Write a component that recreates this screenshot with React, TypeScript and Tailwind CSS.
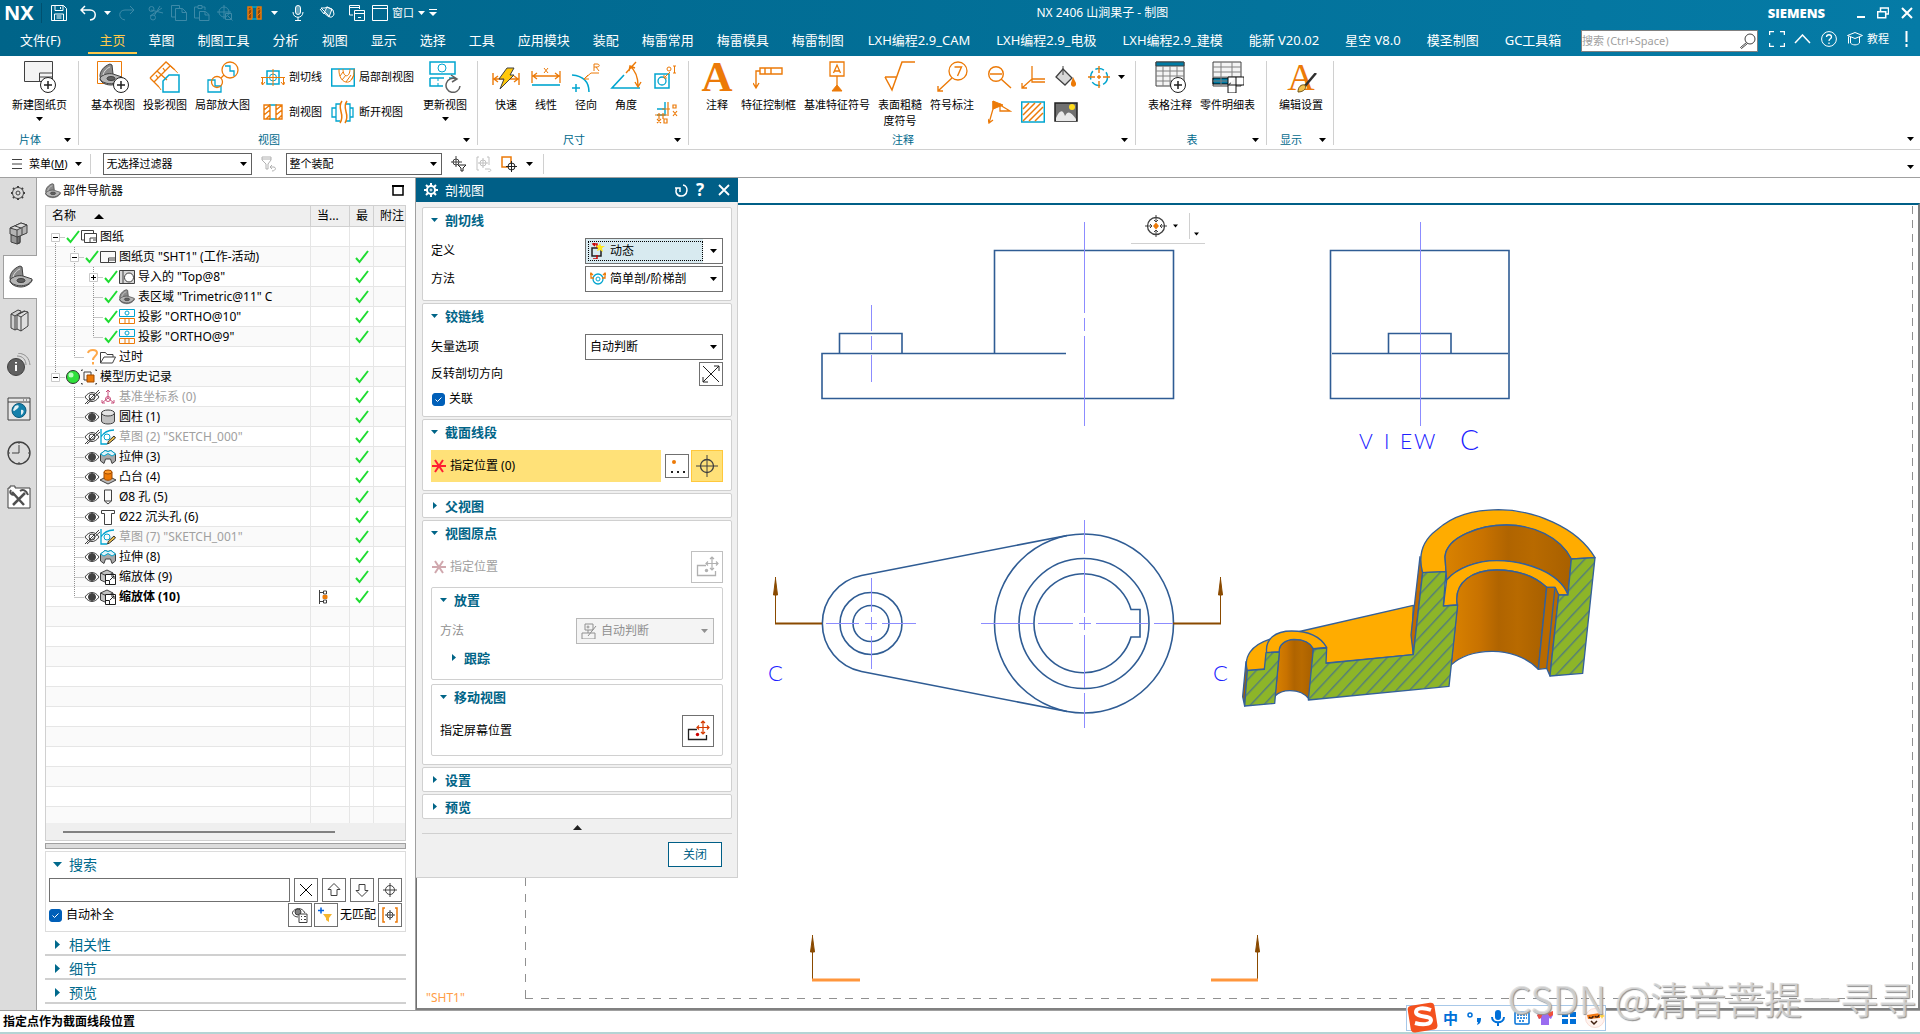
import React, { useState } from "react";

type IconProps = { w?: number; h?: number; box?: string; children: React.ReactNode; className?: string };

const Icon = ({ w = 16, h, box, children, className = "" }: IconProps) => (
  <svg
    width={w}
    height={h ?? w}
    viewBox={box ?? `0 0 ${w} ${h ?? w}`}
    fill="none"
    stroke="currentColor"
    className={`shrink-0 ${className}`}
    aria-hidden="true"
  >
    {children}
  </svg>
);

const OR = "#ec7a08";
const CY = "#00a5cf";
const DK = "#404040";

const Caret = ({ className = "" }: { className?: string }) => (
  <Icon w={7} h={4} className={className}>
    <path d="M0 0h7L3.500 4z" fill="currentColor" stroke="none" />
  </Icon>
);

/* ---------- title bar ---------- */

const TitleSep = () => <span className="h-5 w-px bg-[#00506f]" />;

const TitleBar = () => (
  <div className="flex h-[26px] items-center pl-1 text-white">
    <span className="w-[37px] text-[20px] leading-6 font-bold">NX</span>
    <TitleSep />
    <button aria-label="保存" className="ml-[9px]">
      <Icon><path d="M.5.5h12l3 3v12H.5zM4 .5v5h8v-5M9.500 2v2M3.500 15.500V9h9v6.500M5.500 11h5M5.500 13h5" /></Icon>
    </button>
    <button aria-label="撤销" className="ml-[13px]">
      <Icon><path d="M5 1L1 5l4 4M1 5h9c7 0 7 9 0 10" strokeWidth="1.500" /></Icon>
    </button>
    <Caret className="ml-2" />
    <button aria-label="重做" className="ml-2 text-[#3d8aa8]">
      <Icon><path d="M11 1l4 4-4 4M15 5H6c-7 0-7 9 0 10" /></Icon>
    </button>
    <div className="ml-2"><TitleSep /></div>
    <div className="ml-[5px] flex gap-[7px] text-[#3d8aa8]">
      <button aria-label="剪切">
        <Icon><path d="M2 11L14 3M3 5l12 3" /><circle cx="3.500" cy="4" r="2.500" /><circle cx="5" cy="12.500" r="2.500" /><path d="M12 1L6 11" /></Icon>
      </button>
      <button aria-label="复制">
        <Icon><path d="M4 12H.5V.5h8V3M4.500 3.500h7l4 4v8h-11zM11 3.500v4h4.500" /></Icon>
      </button>
      <button aria-label="粘贴">
        <Icon><path d="M5 13H.5V2H4M8 2h3v3M4 .5h4v3H4zM5.500 6.500h6l3.500 3v6H5.500zM11 7v3h4" /></Icon>
      </button>
      <button aria-label="移动">
        <Icon><circle cx="7" cy="7" r="5" /><path d="M7 0v14M0 7h14M8.500 8.500h6v6h-6zM11 11l4.500 4.500" /></Icon>
      </button>
    </div>
    <div className="ml-[7px]"><TitleSep /></div>
    <button aria-label="剖视图" className="ml-[7px]">
      <Icon w={15} h={14}><path d="M1 1h4v12H1zM10 1h4v12h-4z" stroke={OR} fill="#8a4a10" strokeWidth="1.500" /><path d="M5 1h5M5 13h5" stroke={CY} strokeWidth="1.500" /><path d="M1 5l4-3M1 10l4-4M10 5l4-3M10 10l4-4" stroke={OR} /></Icon>
    </button>
    <Caret className="ml-[9px]" />
    <div className="ml-[7px]"><TitleSep /></div>
    <button aria-label="语音" className="ml-[7px]">
      <Icon w={12} h={16}><rect x="3.500" y=".5" width="5" height="9" rx="2.500" fill="#ffffff60" /><path d="M1 7c0 7 10 7 10 0M6 12v3M3 15.500h6" /></Icon>
    </button>
    <div className="ml-2"><TitleSep /></div>
    <button aria-label="触控" className="ml-[7px]">
      <Icon><path d="M1 4l4 5M2 3l7 7c1 3 5 3 6-1l-1-4-6-3-2 1z" /><path d="M8 2L5 8l5 4 3-8z" fill="#ffffff40" /></Icon>
    </button>
    <div className="ml-[7px]"><TitleSep /></div>
    <button aria-label="切换窗口" className="ml-[7px]">
      <Icon><path d="M4 10H.5V.5h10V4M.5 2.500h10M5.500 5.500h10v10h-10zM5.500 8.500h10M9 12.500h3" /></Icon>
    </button>
    <button className="ml-[7px] flex items-center gap-1 text-[11px] leading-4">
      <Icon><path d="M.5.500h15v15H.5zM.5 3.500h15" /></Icon>
      窗口
      <Caret />
    </button>
    <Icon w={8} h={8} className="ml-1"><path d="M0 .5h8" /><path d="M0 3h8L4 7z" fill="currentColor" stroke="none" /></Icon>
    <h1 className="flex-1 text-center text-[12px] leading-4">NX 2406 山涧果子 - 制图</h1>
    <span className="text-[13px] leading-4 font-black [font-family:'Open_Sans',sans-serif]">SIEMENS</span>
    <div className="flex items-center gap-3 pr-[7px] pl-8">
      <button aria-label="最小化"><Icon w={8} h={12}><path d="M0 10h8" strokeWidth="2" /></Icon></button>
      <button aria-label="还原"><Icon w={12}><path d="M3.500 4V1h8v6H9" strokeWidth="1.500" /><path d="M.7 4.700h8v6h-8z" strokeWidth="1.500" /></Icon></button>
      <button aria-label="关闭窗口"><Icon w={12}><path d="M1 1l10 10M11 1L1 11" strokeWidth="2" /></Icon></button>
    </div>
  </div>
);

const homeTabs = ["主页", "草图", "制图工具", "分析", "视图", "显示", "选择", "工具", "应用模块", "装配", "梅雷常用", "梅雷模具", "梅雷制图"];
const addonTabs = ["LXH编程2.9_CAM", "LXH编程2.9_电极", "LXH编程2.9_建模", "能新 V20.02", "星空 V8.0", "模圣制图", "GC工具箱"];

const TabBar = () => {
  const [active, setActive] = useState("主页");
  const renderTab = (tab: string, pad: string) => (
    <button
      key={tab}
      onClick={() => setActive(tab)}
      className={`h-7 shrink-0 border-b-2 pt-1 pb-1 whitespace-nowrap ${pad} ${
        tab === active ? "border-[#ffc84a] text-[#ffc84a]" : "border-transparent"
      }`}
    >
      {tab}
    </button>
  );
  return (
    <div className="flex h-[30px] items-start text-[13px] leading-5 text-white">
      <button className="mt-1 ml-5 mr-[27px]">文件(F)</button>
      {homeTabs.map((tab) => renderTab(tab, "pl-3 pr-[11px]"))}
      {addonTabs.map((tab) => renderTab(tab, "px-[13px]"))}
      <div className="ml-auto flex items-center pr-3">
        <div className="mt-1 flex h-[22px] w-[177px] items-center border border-[#808080] bg-white pr-px">
          <input
            aria-label="搜索"
            placeholder="搜索 (Ctrl+Space)"
            className="min-w-0 flex-1 text-[11px] text-black outline-none placeholder:text-[#a0a0a0]"
          />
          <Icon className="text-[#404040]"><circle cx="10" cy="6" r="5" /><path d="M6.500 9.500l-6 5 1 1 6-5" /></Icon>
        </div>
        <button aria-label="全屏" className="ml-[11px]"><Icon><path d="M.5 4V.5H5M11 .5h4.500V4M15.500 12v3.500H11M5 15.500H.5V12" strokeWidth="1.500" /></Icon></button>
        <button aria-label="折叠功能区" className="ml-[9px]"><Icon w={17} h={10}><path d="M1 9l7.500-8L16 9" strokeWidth="1.500" /></Icon></button>
        <button aria-label="帮助" className="ml-[10px]"><Icon><circle cx="8" cy="8" r="7.400" /><path d="M5.500 6c0-3 5-3 5 0 0 1.800-2.500 1.800-2.500 4M8 11.500v1.500" strokeWidth="1.300" /></Icon></button>
        <button className="ml-[10px] flex items-center gap-1 text-[11px] leading-4">
          <Icon><path d="M.5 4.500L8 1.500l7.500 3L8 7.500zM3.500 6v6c2 2.500 7 2.500 9 0V6M1.500 5.500v7" /></Icon>
          教程
        </button>
        <Icon w={3} h={16} className="ml-4"><path d="M1.500 0v11M1.500 13v3" strokeWidth="2" /></Icon>
      </div>
    </div>
  );
};

/* ---------- ribbon ---------- */

const BigButton = ({ icon, label, caret }: { icon: React.ReactNode; label: React.ReactNode; caret?: boolean }) => (
  <button className="flex shrink-0 flex-col items-center pt-[5px] text-[11px] leading-4 whitespace-nowrap">
    {icon}
    <span className="mt-1">{label}</span>
    {caret && <Caret className="mt-1" />}
  </button>
);

const SmallButton = ({ icon, label }: { icon: React.ReactNode; label: string }) => (
  <button aria-label={label} className="flex h-6 items-center gap-1 text-[11px] leading-4 whitespace-nowrap">
    {icon}
    {label}
  </button>
);

const IconButton = ({ icon, label }: { icon: React.ReactNode; label: string }) => (
  <button aria-label={label} className="flex h-6 w-6 items-center justify-center">{icon}</button>
);

const Stack = ({ children, className = "" }: { children: React.ReactNode; className?: string }) => (
  <div className={`flex flex-col gap-[11px] pt-[9px] ${className}`}>{children}</div>
);

const Group = ({ title, width, children }: { title: string; width: string; children: React.ReactNode }) => (
  <section className={`relative flex shrink-0 flex-col justify-between ${width}`}>
    <div className="flex items-start">{children}</div>
    <div className="flex h-[18px] items-center text-[11px] leading-4 text-[#00698c]">
      <h2 className="flex-1 pr-1 text-center">{title}</h2>
      <Caret className="mr-2 text-black" />
    </div>
    <span className="absolute top-[5px] right-0 bottom-1 w-px bg-[#d0d0d0]" />
  </section>
);

const PlusBadge = ({ x = 24, y = 24 }: { x?: number; y?: number }) => (
  <g stroke="#202020">
    <circle cx={x} cy={y} r="7.500" fill="#fff" />
    <path d={`M${x - 4} ${y}h8M${x} ${y - 4}v8`} strokeWidth="1.500" />
  </g>
);

const bracketPart = (
  <>
    <path d="M1 13C1 8 5 3 11 1l2 1 1 9-5 5-7 1z" fill="#8a8a8a" stroke="#404040" />
    <path d="M1 15c3-4 9-5 13-4l9 3c1 3-5 8-11 8-6 0-11-3-11-7z" fill="#b5b5b5" stroke="#404040" />
    <path d="M1 16c2 5 17 8 22-1" stroke="#404040" />
    <ellipse cx="12" cy="15.500" rx="4" ry="2" fill="#606060" stroke="#404040" />
    <path d="M4 12c1-4 4-7 7-8" stroke="#d8d8d8" />
  </>
);

const Ribbon = () => (
  <div className="flex h-[94px] border-b border-[#d0d0d0] bg-white text-black">
    <Group title="片体" width="w-[79px]">
      <div className="ml-3">
        <BigButton
          caret
          label="新建图纸页"
          icon={<Icon w={32}><path d="M.5.5h28v20H.5z" fill="#f4f4f4" stroke={DK} /><path d="M15.500 20v-8h13M15.500 16h13" stroke={DK} /><PlusBadge /></Icon>}
        />
      </div>
    </Group>

    <Group title="视图" width="w-[399px]">
      <div className="ml-3 flex gap-2">
        <BigButton
          label="基本视图"
          icon={<Icon w={32}><path d="M.5.5h24v22H.5z" stroke={OR} /><g transform="translate(2 2)">{bracketPart}</g><PlusBadge /></Icon>}
        />
        <BigButton
          label="投影视图"
          icon={<Icon w={32}><path d="M1 17L17 1l9 8M1 17l9 9M8 10l10 9M5 21L21 5M9 17l-2-3M16 10l-2-3" stroke={OR} strokeWidth="1.300" /><path d="M12 29l-2-3M17 1l13 12" stroke={OR} strokeDasharray="4 2" /><path d="M14 31V20l6-6h10v17z" stroke={CY} strokeWidth="1.500" /></Icon>}
        />
        <BigButton
          label="局部放大图"
          icon={<Icon w={32}><circle cx="23" cy="9" r="8" stroke={OR} strokeWidth="1.300" /><path d="M18 5h5v5h4v5" stroke={CY} strokeWidth="1.300" /><path d="M1 31V19h7v6h6v6z" stroke={CY} strokeWidth="1.300" /><circle cx="10" cy="21" r="5.500" stroke={OR} strokeWidth="1.300" /><path d="M14 17l3-3" stroke={OR} strokeWidth="1.300" /></Icon>}
        />
      </div>
      <Stack className="ml-[11px]">
        <SmallButton
          label="剖切线"
          icon={<Icon w={24}><path d="M6 6h12v13H6z" stroke={CY} strokeWidth="1.500" /><circle cx="12" cy="12.500" r="3.500" stroke={CY} /><path d="M0 12.500h24M1.500 13v7M22.500 13v7M0 17l1.500 3L4 17M20 17l2.500 3 1.500-3M12 4v17" stroke={OR} /></Icon>}
        />
        <SmallButton
          label="剖视图"
          icon={<Icon w={24}><path d="M8 5h8M8 19h8" stroke={CY} strokeWidth="1.500" /><path d="M3 5h6v14H3zM15 5h6v14h-6zM3 10l6-5M3 15l6-5M5 19l4-4M15 10l6-5M15 15l6-5M17 19l4-4" stroke={OR} strokeWidth="1.400" /></Icon>}
        />
      </Stack>
      <Stack className="ml-[9px]">
        <SmallButton
          label="局部剖视图"
          icon={<Icon w={24}><path d="M.7 4h22.600v17H.7z" stroke={CY} strokeWidth="1.500" /><path d="M8 4c-1 16 16 19 15 0M12 4c0 9 7 9 7 0M9 11l3-4M11 15l4-5M15 17l5-7M20 15l3-5" stroke={OR} /></Icon>}
        />
        <SmallButton
          label="断开视图"
          icon={<Icon w={24}><path d="M5 8V4h4M5 4v17h4M1 8h4v9H1zM15 4h4v17h-4M19 8h3v9h-3" stroke={CY} strokeWidth="1.300" /><path d="M11 1c-6 8 4 13-2 22M16 1c-6 8 4 13-2 22" stroke={OR} strokeWidth="1.500" /></Icon>}
        />
      </Stack>
      <div className="ml-[9px]">
        <BigButton
          caret
          label="更新视图"
          icon={<Icon w={32}><path d="M1 1h25v12H1zM1 17h14M1 17v8h13M20 17h6" stroke={CY} strokeWidth="1.500" /><circle cx="13" cy="7" r="4" stroke={CY} /><path d="M9 17v8" stroke={CY} strokeDasharray="3 2" /><path d="M31 25a7 7 0 1 1-4-7M22 14l6 4-5 3" stroke="#606060" strokeWidth="1.500" /></Icon>}
        />
      </div>
    </Group>

    <Group title="尺寸" width="w-[211px]">
      <div className="ml-2 grid grid-cols-[40px_40px_40px_40px]">
        <BigButton
          label="快速"
          icon={<Icon w={32}><path d="M3 12v12M29 12v12M3 18h26M8 15l-4 3 4 3M24 15l4 3-4 3" stroke={OR} strokeWidth="1.400" /><path d="M17 7h7l-4 7h4L10 28l4-10h-5z" fill="#ffc80a" stroke="#404040" /></Icon>}
        />
        <BigButton
          label="线性"
          icon={<Icon w={32}><path d="M2 10v12M30 10v12M2 15h28M7 12l-4 3 4 3M25 12l4 3-4 3" stroke={OR} strokeWidth="1.300" /><path d="M14 7l4 5M18 7l-4 5" stroke={OR} /><path d="M2 24h28" stroke={CY} strokeWidth="1.600" /></Icon>}
        />
        <BigButton
          label="径向"
          icon={<Icon w={32}><path d="M2 14c12 1 17 7 17 17M6 23v8M2 27h8" stroke={CY} strokeWidth="1.500" /><path d="M29 12h-8l-7 6M18 14l-4 4 5 0M24 10V3h3c3 0 3 3 0 3h-3M26 6l3 4" stroke={OR} /></Icon>}
        />
        <BigButton
          label="角度"
          icon={<Icon w={32}><path d="M14 14L2 27h28" stroke={CY} strokeWidth="1.600" /><path d="M16 12L26 1M20 5c6 5 8 12 8 20M19 10l1-5 5 2M25 21l3 5 3-5" stroke={OR} strokeWidth="1.400" /></Icon>}
        />
      </div>
      <Stack className="ml-2">
        <IconButton
          label="孔和螺纹标注"
          icon={<Icon w={24}><path d="M1 9h14v14H1z" stroke={CY} strokeWidth="1.500" /><circle cx="8" cy="16" r="4" stroke={CY} strokeWidth="1.300" /><path d="M16 7l-6 6M10 10v3h3M19 1h3M20.500 1v7M19 8h3" stroke={OR} /><circle cx="15" cy="4" r="2" stroke={OR} /></Icon>}
        />
        <IconButton
          label="坐标尺寸"
          icon={<Icon w={24}><path d="M3 9h8V2M11 9v6H3" stroke={CY} strokeWidth="1.400" /><path d="M14 2v14M8 9h8M1 15h12M5 13v6M9 13v6M19 5h3v3h-3zM19 11l4 5M23 11l-4 5M3 19l4 4M7 19l-4 4M10 19h3v4h-3z" stroke={OR} strokeWidth="1.200" /></Icon>}
        />
      </Stack>
    </Group>

    <Group title="注释" width="w-[447px]">
      <div className="ml-3 flex gap-2">
        <BigButton
          label="注释"
          icon={<span className="h-8 w-8 text-center text-[43px] leading-8 font-bold text-[#ec7a08] [font-family:'Liberation_Serif',serif]">A</span>}
        />
        <BigButton
          label="特征控制框"
          icon={<Icon w={32}><path d="M7 7h22v6H7zM12 7v6M18 7v6M7 10H3v16M0 22l3 5 3-5" stroke={OR} strokeWidth="1.400" /></Icon>}
        />
        <BigButton
          label="基准特征符号"
          icon={<Icon w={32}><path d="M9 1h14v14H9zM16 15v10M12.500 12L16 4l3.500 8M13.500 10h5" stroke={OR} strokeWidth="1.300" /><path d="M11 30h10l-5-6z" fill={OR} stroke={OR} /></Icon>}
        />
        <BigButton
          label={<>表面粗糙<br />度符号</>}
          icon={<Icon w={32}><path d="M1 16h12M1 16l7 13L18 1h13" stroke={OR} strokeWidth="1.500" /></Icon>}
        />
        <BigButton
          label="符号标注"
          icon={<Icon w={32}><circle cx="22" cy="10" r="9" stroke={OR} strokeWidth="1.300" /><path d="M16 17L2 30M2 25v5h5M18.500 6h7l-4 9" stroke={OR} strokeWidth="1.400" /></Icon>}
        />
      </div>
      <Stack className="ml-[14px]">
        <IconButton label="中心线放大" icon={<Icon w={24}><circle cx="8" cy="9" r="7.300" stroke={OR} strokeWidth="1.400" /><path d="M2 9h12M13 14l10 9" stroke={OR} strokeWidth="1.500" /></Icon>} />
        <IconButton label="目标点符号" icon={<Icon w={24}><path d="M5 1v8l10-4z" fill={OR} stroke={OR} /><path d="M5 1v8L1 23M0 19l1 4 4-3M5 9l8-5M12 5l10 6H12z" stroke={OR} strokeWidth="1.300" /></Icon>} />
      </Stack>
      <Stack className="ml-[9px]">
        <IconButton label="相交符号" icon={<Icon w={24}><path d="M11 1v16h13M11 14h13M11 14L1 23M1 18v5h5" stroke={OR} strokeWidth="1.300" /></Icon>} />
        <IconButton label="剖面线" icon={<Icon w={24}><path d="M.7 2h22.600v20H.7z" stroke={CY} strokeWidth="1.500" /><path d="M2 9l6-6M2 15L14 3M2 21L20 3M8 21L22 7M14 21l8-8" stroke={OR} strokeWidth="1.500" /></Icon>} />
      </Stack>
      <Stack className="ml-[9px]">
        <IconButton label="区域填充" icon={<Icon w={24}><path d="M9 4l9 9-7 7-9-8z" fill="#d8d8d8" stroke={DK} strokeWidth="1.300" /><path d="M9 1v9" stroke={DK} /><path d="M19 12l3 6c1 5-6 5-5 0z" fill={OR} stroke="none" /></Icon>} />
        <IconButton label="图像" icon={<Icon w={24}><path d="M1 3h22v18H1z" fill="#707070" stroke="#202020" strokeWidth="1.500" /><path d="M2 18c4-9 7-8 9-2 3-6 6-4 11 3v2H2z" fill="#e8e8e8" stroke="none" /><circle cx="18" cy="7" r="3" fill="#ffdc1e" stroke="none" /></Icon>} />
      </Stack>
      <Stack className="ml-[9px]">
        <IconButton label="中心标记" icon={<Icon w={24}><circle cx="12" cy="12" r="8.500" stroke={CY} strokeWidth="1.500" strokeDasharray="9 3" /><path d="M12 1v7M12 16v7M1 12h7M16 12h7M10 12h4M12 10v4" stroke={OR} strokeWidth="1.400" /></Icon>} />
      </Stack>
      <Caret className="mt-[19px] ml-[7px]" />
    </Group>

    <Group title="表" width="w-[131px]">
      <div className="ml-3 flex gap-2">
        <BigButton
          label="表格注释"
          icon={<Icon w={32}><path d="M2 1h28v24H2z" fill="#f4f4f4" stroke={DK} /><path d="M2 1h28v4H2z" fill="#007ca5" stroke={DK} /><path d="M2 10h28M2 15h28M2 20h28M9 5v20M16 5v20M23 5v20" stroke="#808080" /><PlusBadge /></Icon>}
        />
        <BigButton
          label="零件明细表"
          icon={<Icon w={32}><path d="M1 1h28v24H1z" fill="#f4f4f4" stroke={DK} /><path d="M1 17h17v6H1z" fill="#007ca5" /><path d="M1 6h28M1 11h28M1 16h28M1 20h16M9 1v24M20 1v15" stroke="#808080" /><path d="M16 16h16v8h-8v8h-8zM16 24h8v-8" fill="#fff" stroke="#101010" /></Icon>}
        />
      </div>
    </Group>

    <Group title="显示" width="w-[67px]">
      <div className="ml-3">
        <BigButton
          label="编辑设置"
          icon={
            <span className="relative h-8 w-8 text-center text-[38px] leading-8 text-[#ec7a08] [font-family:'Liberation_Serif',serif]">
              A
              <Icon w={20} className="absolute right-0 bottom-0"><path d="M19 0L8 13" stroke="#303030" strokeWidth="2.500" /><path d="M1 19c0-5 3-8 7-7 2 3-1 7-7 7z" fill="#f2c14a" stroke="#705010" /></Icon>
            </span>
          }
        />
      </div>
    </Group>
    <Caret className="mt-auto mr-[6px] mb-2 ml-auto" />
  </div>
);

/* ---------- selection bar ---------- */

const FilterSelect = ({ label, value, width }: { label: string; value: string; width: string }) => (
  <div className={`relative h-[22px] ${width}`}>
    <select aria-label={label} className="h-full w-full appearance-none border border-[#606060] bg-white pl-[3px] text-[11px] leading-4 text-black">
      <option>{value}</option>
    </select>
    <Caret className="pointer-events-none absolute top-[9px] right-[5px]" />
  </div>
);

const SelectionBar = () => (
  <div className="flex h-7 items-center border-b border-[#a0a0a0] bg-white pl-3 text-[11px] leading-4">
    <button className="flex items-center gap-[7px]">
      <Icon w={10} h={10}><path d="M0 .5h10M0 5h10M0 9.500h10" stroke={DK} /></Icon>
      <span>菜单(<u>M</u>)</span>
      <Caret />
    </button>
    <span className="ml-2 h-5 w-px bg-[#d0d0d0]" />
    <div className="ml-3 flex items-center gap-[9px]">
      <FilterSelect label="类型过滤器" value="无选择过滤器" width="w-[149px]" />
      <Icon className="text-[#b0b0b0]"><path d="M1 1h9v3L7 8v5H5V8L1 4zM1 3h9M9 11h4c3 1 1 4-2 4M11 9l-2 2 2 2" /></Icon>
      <FilterSelect label="选择范围" value="整个装配" width="w-[156px]" />
      <button aria-label="选择过滤器"><Icon><circle cx="5" cy="6" r="3" stroke={DK} /><path d="M5 0v11M0 6h11" stroke={DK} /><path d="M7 9h8l-3 3v3h-2v-3z" fill="#fff" stroke="#202020" /></Icon></button>
      <button aria-label="重置选择"><Icon className="text-[#c0c0c0]"><path d="M3 1H1v13h2M11 1h2v8M9 13h4c3 0 2 3-1 3" /><circle cx="7" cy="7" r="3" /><path d="M7 2v10M2 7h10" /></Icon></button>
      <button aria-label="选择方式"><Icon><path d="M1 1h9v10H1z" stroke={OR} strokeWidth="1.500" /><circle cx="10.500" cy="10.500" r="3.500" fill="#fff" stroke="#202020" /><path d="M10.500 5v11M5 10.500h11" stroke="#202020" /></Icon></button>
      <Caret />
    </div>
    <span className="ml-[10px] h-5 w-px bg-[#d0d0d0]" />
    <Caret className="mr-[6px] mb-2 ml-auto self-end" />
  </div>
);

/* ---------- resource bar ---------- */

const resourceItems: { label: string; icon: React.ReactNode }[] = [
  {
    label: "装配导航器",
    icon: (
      <Icon w={24} className="text-[#404040]">
        <path d="M4 14h9v8l-3 1-6-2z" fill="#989898" />
        <path d="M10 16l3-2v7l-3 2z" fill="#707070" />
        <path d="M3 7l11-5 6 2v8l-7 3-3 1-7-3z" fill="#b4b4b4" />
        <path d="M3 7l7 2 10-5-6-2z" fill="#dcdcdc" />
        <path d="M10 9v7M15 7v7M8 5l6 2" />
      </Icon>
    ),
  },
  { label: "部件导航器", icon: <Icon w={24}>{bracketPart}</Icon> },
  {
    label: "重用库",
    icon: (
      <Icon w={24} className="text-[#404040]">
        <path d="M4 5l7-4 3 1v16l-6 3-4-2z" fill="#cfcfcf" />
        <path d="M4 5l4 2v14M8 7l6-4" />
        <path d="M10 6l7-4 4 1v14l-7 5-4-2z" fill="#dedede" />
        <path d="M10 6l4 2v14M14 8l7-5M12 5l6-3" />
      </Icon>
    ),
  },
  { label: "HD3D 工具", icon: <Icon w={24}><circle cx="9" cy="14" r="8.500" fill="#606060" stroke="#404040" /><path d="M9 12v6M9 9v1.500" stroke="#fff" strokeWidth="2" /><path d="M10 3c6 0 9 4 9 9M11 0c8 1 11 5 12 12" stroke="#909090" /></Icon> },
  { label: "Web 浏览器", icon: <Icon w={24}><path d="M1 1h22v22H1z" stroke={DK} fill="#e8e8e8" /><path d="M1 5h22M16 3h1M19 3h1" stroke={DK} /><circle cx="12" cy="13.500" r="7" fill="#1581ab" stroke="#0a5a7c" /><path d="M8 9c4-2 5 1 2 3s-3 3-4 1zM14 13c4-1 3 4 0 5z" fill="#e0f0f4" stroke="none" /></Icon> },
  { label: "历史记录", icon: <Icon w={24} className="text-[#404040]"><circle cx="12" cy="12" r="11" strokeWidth="1.300" /><path d="M12 4v8H5M12 1v2M12 21v2M1 12h2M21 12h2" /></Icon> },
  { label: "加工向导", icon: <Icon w={24}><path d="M1 3h2V1h5v2h15v20H1z" fill="#fff" stroke={DK} /><path d="M5 7l12 13M18 8L6 20" stroke="#505050" strokeWidth="2.500" /><path d="M4 5c-2 3 1 6 4 4M13 6c3-2 6-1 8 4" stroke="#505050" strokeWidth="2" /></Icon> },
];

const ResourceBar = () => {
  const [active, setActive] = useState("部件导航器");
  return (
    <nav className="flex w-[37px] shrink-0 flex-col items-center border-r border-[#a0a0a0] bg-[#dcdcdc]">
      <button aria-label="资源条选项" className="flex h-[33px] w-full items-center justify-center pb-1">
        <Icon w={16} className="text-[#404040]">
          <path d="M8 1v2M8 13v2M1 8h2M13 8h2M3 3l1.500 1.500M11.500 11.500L13 13M13 3l-1.500 1.500M4.500 11.500L3 13" strokeWidth="2" />
          <circle cx="8" cy="8" r="5.500" fill="#dcdcdc" /><circle cx="8" cy="8" r="2" />
        </Icon>
      </button>
      {resourceItems.map((item) => (
        <button
          key={item.label}
          aria-label={item.label}
          onClick={() => setActive(item.label)}
          className={`flex h-11 w-[34px] shrink-0 items-center justify-center self-end ${
            item.label === active ? "-mr-px border border-r-0 border-[#a0a0a0] bg-white" : ""
          }`}
        >
          {item.icon}
        </button>
      ))}
    </nav>
  );
};

/* ---------- part navigator ---------- */

const Check = ({ w = 14 }: { w?: number }) => (
  <Icon w={w} h={14} box="0 0 14 14"><path d="M1 8l3.500 4L13 1" stroke="#1fdc32" strokeWidth="2" /></Icon>
);

const statusIcons = {
  check: <Check />,
  question: <Icon w={14} h={16}><path d="M3 4c1-4 9-4 9 0 0 3-4 3-4 7M8 13v2.500" stroke="#ffa94a" strokeWidth="2" /></Icon>,
  ball: <Icon w={16} h={14}><circle cx="8" cy="7" r="6.500" fill="#2ee03a" stroke="#303030" /><circle cx="6" cy="5" r="2.500" fill="#b9ffbe" stroke="none" /></Icon>,
  eye: <Icon><path d="M1 8c4-6 10-6 14 0-4 6-10 6-14 0z" stroke={DK} /><circle cx="8" cy="8" r="3.500" fill="#404040" stroke={DK} /></Icon>,
  hidden: <Icon><path d="M1 8c4-6 10-6 14 0-4 6-10 6-14 0zM1 15L15 1M3 15L16 3" stroke={DK} /><circle cx="8" cy="8" r="3" stroke={DK} /></Icon>,
};

const treeIcons = {
  sheets: <Icon><path d="M3 11H.5V1.500h12V4M3.500 4.500h12v9h-12zM9 13v-4h6M12 11h3" stroke={DK} /></Icon>,
  sheet: <Icon><path d="M.5 2.500h15v11H.5zM8.500 13v-4h7M8.500 11h7" stroke={DK} /></Icon>,
  imported: <Icon><path d="M.5 1.500h15v13H.5z" fill="#d8d8d8" stroke={DK} /><path d="M4 2v12" stroke={DK} /><circle cx="10" cy="8.500" r="4.500" fill="#fff" stroke={DK} /></Icon>,
  region: <Icon box="0 0 24 24">{bracketPart}</Icon>,
  projection: <Icon><path d="M.5.5h15v7H.5z" stroke={CY} /><circle cx="8" cy="4" r="2" stroke={CY} /><path d="M.5 9.500h15v5H.5zM6 10v5M10 10v5" stroke={OR} /></Icon>,
  folder: <Icon><path d="M.5 14V3.500h5l1.500 2h6V8M.5 14L4 8h11.500l-3 6z" stroke={DK} /></Icon>,
  history: <Icon><path d="M.5 2V1H2M14 1h1.500v1M.5 14v1H2M14 15h1.500v-1M3 3h7v8H3z" stroke={DK} /><path d="M6 6h7v7H6z" fill={OR} stroke="#a04a00" /></Icon>,
  csys: <Icon className="text-[#c8507c]"><path d="M8 1v8M8 9l-6 5M8 9l6 5M6 3l2-2 2 2M2 11v3h3M14 11v3h-3" /><circle cx="8" cy="10" r="2.500" /></Icon>,
  cylinder: <Icon><path d="M1.500 4v8c0 4 13 4 13 0V4" fill="#c0c0c0" stroke={DK} /><ellipse cx="8" cy="4" rx="6.500" ry="3" fill="#e4e4e4" stroke={DK} /></Icon>,
  sketch: <Icon><path d="M1 0v15h6M1 8C4 3 9 1 14 1" stroke={CY} strokeWidth="1.300" /><circle cx="7" cy="8" r="3" stroke={CY} /><path d="M14 7l1.500 2-6 5-2 1 1-3z" fill="#f2c14a" stroke="#303030" /></Icon>,
  extrude: <Icon><path d="M.5 5L5 1.500l3 1 3-1L15.500 5v7L12 14.500 10.500 10h-5L4 14.500.5 12z" fill="#a8a8a8" stroke={DK} /><path d="M.5 5L5 1.500l3 1 3-1L15.500 5 12 7 8 4.500 4 7z" fill="#dff4fa" stroke={CY} /></Icon>,
  boss: <Icon><path d="M0 11l8-4 8 4-8 4z" fill="#b8b8b8" stroke={DK} /><path d="M4 3v6c0 3 8 3 8 0V3" fill={OR} stroke="#a04a00" /><ellipse cx="8" cy="3" rx="4" ry="2" fill="#ff9a2a" stroke="#a04a00" /></Icon>,
  hole: <Icon><path d="M4.500 1h7v11L8 15l-3.500-3zM4.500 12h7" stroke={DK} /></Icon>,
  cbore: <Icon><path d="M1.500 1.500h13v3h-3v11h-7v-11h-3z" stroke={DK} /></Icon>,
  scaleBody: <Icon><path d="M.5 4L7 1l6 3v7l-6 3-6.500-3z" fill="#c4c4c4" stroke={DK} /><path d="M.5 4L7 7l6-3" stroke={DK} /><path d="M5.500 5.500h10v10h-10z" fill="#fff" stroke="#202020" /><path d="M10 11l4-4M11 7h3v3M6 11.500h3.500v4" stroke="#202020" /></Icon>,
};

interface TreeRow {
  guides: string;
  status: keyof typeof statusIcons;
  icon: keyof typeof treeIcons;
  text: string;
  latest?: boolean;
  dim?: boolean;
  current?: boolean;
}

// guides: "|" pass-through, "T" tee, "L" last child, "-" expanded, "+" collapsed,
// "r" first root, "e" last root
const treeRows: TreeRow[] = [
  { guides: "r", status: "check", icon: "sheets", text: "图纸" },
  { guides: "|-", status: "check", icon: "sheet", text: '图纸页 "SHT1" (工作-活动)', latest: true },
  { guides: "||+", status: "check", icon: "imported", text: '导入的 "Top@8"', latest: true },
  { guides: "||T", status: "check", icon: "region", text: '表区域 "Trimetric@11" C', latest: true },
  { guides: "||T", status: "check", icon: "projection", text: '投影 "ORTHO@10"', latest: true },
  { guides: "||L", status: "check", icon: "projection", text: '投影 "ORTHO@9"', latest: true },
  { guides: "|L", status: "question", icon: "folder", text: "过时" },
  { guides: "e", status: "ball", icon: "history", text: "模型历史记录", latest: true },
  { guides: " T", status: "hidden", icon: "csys", text: "基准坐标系 (0)", latest: true, dim: true },
  { guides: " T", status: "eye", icon: "cylinder", text: "圆柱 (1)", latest: true },
  { guides: " T", status: "hidden", icon: "sketch", text: '草图 (2) "SKETCH_000"', latest: true, dim: true },
  { guides: " T", status: "eye", icon: "extrude", text: "拉伸 (3)", latest: true },
  { guides: " T", status: "eye", icon: "boss", text: "凸台 (4)", latest: true },
  { guides: " T", status: "eye", icon: "hole", text: "Ø8 孔 (5)", latest: true },
  { guides: " T", status: "eye", icon: "cbore", text: "Ø22 沉头孔 (6)", latest: true },
  { guides: " T", status: "hidden", icon: "sketch", text: '草图 (7) "SKETCH_001"', latest: true, dim: true },
  { guides: " T", status: "eye", icon: "extrude", text: "拉伸 (8)", latest: true },
  { guides: " T", status: "eye", icon: "scaleBody", text: "缩放体 (9)", latest: true },
  { guides: " L", status: "eye", icon: "scaleBody", text: "缩放体 (10)", latest: true, current: true },
];

const Guide = ({ kind }: { kind: string }) => (
  <Icon w={19} h={20}>
    <g stroke="#909090" strokeDasharray="1 1">
      {"|T-+".includes(kind) && <path d="M9.500 0v20" />}
      {kind === "r" && <path d="M9.500 10v10" />}
      {"Le".includes(kind) && <path d="M9.500 0v10" />}
      {"TL-+re".includes(kind) && <path d="M9.500 10.500H19" />}
    </g>
    {"-+re".includes(kind) && (
      <>
        <path d="M5.500 6.500h8v8h-8z" fill="#fff" stroke="#c8c8c8" />
        <path d={kind === "+" ? "M7 10.500h5M9.500 8v5" : "M7 10.500h5"} stroke="#000" />
      </>
    )}
  </Icon>
);

const cell = "border-r border-b border-[#e6e6e6] p-0";
const headCell = "border-r border-b border-[#d0d0d0] p-0 pl-[6px] font-normal";

const NavTable = () => (
  <table className="w-full table-fixed border-separate border-spacing-0 text-[12px] leading-4">
    <colgroup>
      <col />
      <col className="w-[39px]" />
      <col className="w-6" />
      <col className="w-[31px]" />
    </colgroup>
    <thead>
      <tr className="h-[21px] bg-[#efefef] text-left">
        <th className={headCell}>
          <span className="flex items-center gap-[18px]">
            名称
            <Icon w={10} h={5}><path d="M0 5h10L5 0z" fill="#000" stroke="none" /></Icon>
          </span>
        </th>
        <th className={headCell}>当...</th>
        <th className={headCell}>最</th>
        <th className="border-b border-[#d0d0d0] p-0 pl-[6px] font-normal whitespace-nowrap">附注</th>
      </tr>
    </thead>
    <tbody>
      {treeRows.map((row, i) => (
        <tr key={i} className={`h-5 ${i % 2 ? "bg-[#fafafa]" : "bg-white"}`}>
          <td className={cell}>
            <div className="flex h-[19px] items-center overflow-hidden whitespace-nowrap">
              {row.guides.split("").map((g, j) => <Guide key={j} kind={g} />)}
              <span className="flex w-4 justify-center">{statusIcons[row.status]}</span>
              {treeIcons[row.icon]}
              <span className={`pl-[3px] ${row.dim ? "text-[#a0a0a0]" : ""} ${row.current ? "font-bold" : ""}`}>{row.text}</span>
            </div>
          </td>
          <td className={cell}>
            {row.current && (
              <Icon w={10} h={14} className="ml-[7px]"><path d="M1.500 0v14M1.500 2.500H6M1.500 11.500H6M5.500 1h3v3h-3zM5.500 10h3v3h-3z" stroke={DK} /><path d="M5 5.500h4v3H5z" fill={OR} stroke={OR} /></Icon>
            )}
          </td>
          <td className={cell}>
            {row.latest && <span className="flex justify-center"><Check /></span>}
          </td>
          <td className="border-b border-[#e6e6e6] p-0" />
        </tr>
      ))}
      {Array.from({ length: 11 }, (_, i) => (
        <tr key={`empty-${i}`} className={`h-5 ${i % 2 ? "bg-white" : "bg-[#fafafa]"}`}>
          <td className={cell} />
          <td className={cell} />
          <td className={cell} />
          <td className="border-b border-[#e6e6e6] p-0" />
        </tr>
      ))}
    </tbody>
  </table>
);

const SquareButton = ({ label, children }: { label: string; children: React.ReactNode }) => (
  <button aria-label={label} className="flex h-6 w-6 shrink-0 items-center justify-center border border-[#707070] bg-white">
    {children}
  </button>
);

const CheckBox = ({ id, label }: { id: string; label: string }) => (
  <div className="flex items-center gap-1 text-[12px] leading-4">
    <span className="relative h-[13px] w-[13px]">
      <input id={id} type="checkbox" defaultChecked className="peer block h-[13px] w-[13px] appearance-none rounded-[3px] border border-[#808080] checked:border-[#005fb8] checked:bg-[#005fb8]" />
      <Icon w={13} className="pointer-events-none absolute top-0 left-0 hidden text-white peer-checked:block"><path d="M3.500 6.500l2 2 4-4" /></Icon>
    </span>
    <label htmlFor={id}>{label}</label>
  </div>
);

const crosshair = <><circle cx="8" cy="8" r="4.500" /><path d="M8 1v14M1 8h14" /></>;

const PartNavigator = () => (
  <aside className="flex w-[379px] shrink-0 flex-col border-r border-[#a0a0a0] bg-white pr-[9px] pl-2 text-black">
    <div className="flex h-[27px] shrink-0 items-center pr-[2px] pb-[2px] text-[12px] leading-4">
      <Icon box="0 0 24 24">{bracketPart}</Icon>
      <h2 className="pl-[2px]">部件导航器</h2>
      <button aria-label="最大化" className="ml-auto"><Icon w={12} h={11}><path d="M1 1h10v9H1z" strokeWidth="1.500" /><path d="M0 1h12" strokeWidth="2" /></Icon></button>
    </div>
    <div className="flex min-h-0 flex-1 flex-col border border-[#d0d0d0]">
      <div className="min-h-0 flex-1 overflow-hidden"><NavTable /></div>
      <div className="flex h-[17px] shrink-0 items-center bg-[#efefef] pl-[17px]">
        <span className="h-[2px] w-[272px] bg-[#808080]" />
      </div>
    </div>
    <div className="mt-[2px] h-[6px] shrink-0 border border-[#a0a0a0] bg-[#dcdcdc]" />
    <section className="mt-[2px] h-[81px] shrink-0 border border-[#dcdcdc] px-[3px]">
      <button className="flex h-[25px] items-center gap-[7px] pl-1 text-[14px] leading-5 text-[#00698c]">
        <Icon w={9} h={5}><path d="M0 0h9L4.500 5z" fill="currentColor" stroke="none" /></Icon>
        搜索
      </button>
      <div className="flex gap-1 pt-px">
        <input aria-label="搜索部件" className="h-6 min-w-0 flex-1 border border-[#707070] px-1 text-[12px] outline-none" />
        <SquareButton label="清除"><Icon><path d="M2 2l12 12M14 2L2 14" /></Icon></SquareButton>
        <SquareButton label="上一个"><Icon className="text-[#404040]"><path d="M8 1.500l6 6h-3v6H5v-6H2z" /></Icon></SquareButton>
        <SquareButton label="下一个"><Icon className="text-[#404040]"><path d="M8 14.500l6-6h-3v-6H5v6H2z" /></Icon></SquareButton>
        <SquareButton label="定位"><Icon className="text-[#404040]">{crosshair}</Icon></SquareButton>
      </div>
      <div className="flex items-center justify-between pt-px">
        <CheckBox id="auto-complete" label="自动补全" />
        <div className="flex items-center gap-[2px] text-[12px] leading-4">
          <SquareButton label="列设置"><Icon><path d="M0 6c3-6 10-6 13 0M6 10c-3 0-5-2-6-4" stroke={DK} /><circle cx="6" cy="5" r="3" fill="#808080" stroke={DK} /><path d="M7 7h8v8.500H7z" fill="#fff" stroke={DK} /><path d="M9 9.500h1M9 12.500h1M12 9.500h2M12 12.500h2" stroke={DK} /></Icon></SquareButton>
          <SquareButton label="添加过滤器"><Icon><path d="M0 3.500h6M3 .5v6" stroke="#0060e0" strokeWidth="1.500" /><path d="M5 7h9l-3 4v4l-3-2v-2z" fill="#f5b52e" stroke="none" /></Icon></SquareButton>
          <span className="w-9">无匹配</span>
          <SquareButton label="范围"><Icon><path d="M3 1H1v14h2M13 1h2v14h-2" stroke={OR} strokeWidth="1.500" /><circle cx="8" cy="8" r="3" stroke={DK} /><path d="M8 3v10M3 8h10" stroke={DK} /></Icon></SquareButton>
        </div>
      </div>
    </section>
    {["相关性", "细节", "预览"].map((name) => (
      <button key={name} className="flex h-6 shrink-0 items-center gap-[9px] border-b-2 border-[#d0d0d0] pt-[3px] pl-[10px] text-left text-[14px] leading-5 text-[#00698c]">
        <Icon w={5} h={9}><path d="M0 0v9l5-4.500z" fill="currentColor" stroke="none" /></Icon>
        {name}
      </button>
    ))}
    <div className="h-[6px] shrink-0" />
  </aside>
);

/* ---------- section view dialog ---------- */

const Heading = ({ title, open = true }: { title: string; open?: boolean }) => (
  <button className="flex h-[23px] w-full items-center text-[13px] leading-5 font-bold text-[#006487]">
    <span className="flex w-[14px]">
      {open ? (
        <Icon w={7} h={4}><path d="M0 0h7L3.500 4z" fill="currentColor" stroke="none" /></Icon>
      ) : (
        <Icon w={4} h={7} className="ml-[2px]"><path d="M0 0v7l4-3.500z" fill="currentColor" stroke="none" /></Icon>
      )}
    </span>
    {title}
  </button>
);

const Panel = ({ children, className = "" }: { children: React.ReactNode; className?: string }) => (
  <section className={`rounded-[2px] border border-[#d0d0d0] bg-white px-2 ${className}`}>{children}</section>
);

interface DropProps {
  id: string;
  label: string;
  value: string;
  icon?: React.ReactNode;
  disabled?: boolean;
  focused?: boolean;
}

const Drop = ({ id, label, value, icon, disabled, focused }: DropProps) => (
  <div className={`flex h-7 items-center justify-between ${disabled ? "text-[#909090]" : ""}`}>
    <label htmlFor={id}>{label}</label>
    <div className="relative h-[26px] w-[138px]">
      <select
        id={id}
        disabled={disabled}
        className={`h-full w-full appearance-none border text-[12px] leading-4 disabled:opacity-100 ${
          disabled ? "border-[#b8b8b8] bg-[#f4f4f4]" : "border-[#707070] bg-white"
        } ${icon ? "pl-6" : "pl-1"} ${focused ? "bg-linear-to-r from-[#d8eaf0] from-86% to-white to-86%" : ""}`}
      >
        <option>{value}</option>
      </select>
      {focused && <span className="pointer-events-none absolute top-[3px] bottom-[3px] left-[3px] w-[115px] border border-dotted border-black" />}
      {icon && <span className="pointer-events-none absolute top-[5px] left-[5px]">{icon}</span>}
      <Caret className="pointer-events-none absolute top-[11px] right-[6px]" />
    </div>
  </div>
);

const Star = ({ dim }: { dim?: boolean }) => (
  <Icon w={14} className={dim ? "text-[#d0a8ae]" : "text-[#ff1e32]"}><path d="M0 7h14M3 1l8 12M11 1L3 13" strokeWidth="2" /></Icon>
);

const MoveIcon = ({ dim }: { dim?: boolean }) => {
  const line = dim ? "#b0b0b0" : "#202020";
  const hot = dim ? "#b0b0b0" : "#d63a00";
  return (
    <Icon w={24}>
      <path d="M11 10.500H2.500v10h18V16" stroke={line} strokeWidth="1.300" />
      <path d="M17 2v13M11 8.500h12M15 4l2-2 2 2M15 13l2 2 2-2M13 6.500l-2 2 2 2M21 6.500l2 2-2 2" stroke={hot} strokeWidth="1.200" />
      <circle cx="11.500" cy="15.500" r="1.700" fill={dim ? "#b0b0b0" : "#c00"} stroke="none" />
    </Icon>
  );
};

const SectionDialog = () => (
  <div role="dialog" aria-label="剖视图" className="absolute top-0 left-0 w-[322px] border-r border-b border-[#d0d0d0] bg-[#f0f0f0] text-[12px] leading-4 text-black">
    <div className="-mr-px flex h-6 items-center bg-[#005f87] px-2 text-white">
      <Icon w={14} className="text-white"><circle cx="7" cy="7" r="4" strokeWidth="2" /><circle cx="7" cy="7" r="1" /><path d="M7 0v3M7 11v3M0 7h3M11 7h3M2 2l2 2M10 10l2 2M12 2l-2 2M2 12l2-2" strokeWidth="2" /></Icon>
      <h2 className="pl-[7px] text-[13px]">剖视图</h2>
      <div className="ml-auto flex items-center gap-2">
        <button aria-label="重置"><Icon w={13}><path d="M8 1c6 1 5 11-2 11-5 0-6-5-4-8M0 4h5v4" strokeWidth="1.500" /></Icon></button>
        <button aria-label="帮助" className="text-[17px] leading-5 font-bold">?</button>
        <button aria-label="关闭对话框" className="ml-[6px]"><Icon w={12}><path d="M1 1l10 10M11 1L1 11" strokeWidth="1.800" /></Icon></button>
      </div>
    </div>
    <div className="flex flex-col gap-[2px] pt-[5px] pr-[5px] pl-[6px]">
      <Panel className="pb-[7px]">
        <Heading title="剖切线" />
        <div className="pt-[6px]">
          <Drop id="definition" label="定义" value="动态" focused icon={<Icon><path d="M2 5h9v8H2z" stroke="#202020" strokeWidth="1.500" /><path d="M3 1h4v4M5 0L3 1l2 2M7 12v4H3" stroke="#c00" strokeWidth="1.500" /><path d="M10 0l1 3 4 0-3 2 1 4-3-2-3 1 1-3-2-2 3-1z" fill="#ffe81e" stroke="none" /></Icon>} />
          <Drop id="method" label="方法" value="简单剖/阶梯剖" icon={<Icon><circle cx="8" cy="8" r="5" stroke={CY} strokeWidth="1.300" /><circle cx="8" cy="8" r="2" stroke={CY} /><path d="M1 2v5h3M15 2v5h-3M0 4l1-2 2 2M13 4l2-2 1 2" stroke={OR} strokeWidth="1.300" /></Icon>} />
        </div>
      </Panel>
      <Panel className="h-[114px]">
        <Heading title="铰链线" />
        <div className="pt-[6px]">
          <Drop id="vector" label="矢量选项" value="自动判断" />
          <div className="flex h-[26px] items-center justify-between">
            反转剖切方向
            <SquareButton label="反转剖切方向"><Icon w={18} className="text-[#202020]"><path d="M1 1l16 16M17 1L1 17M12 1h5v5M1 12v5h5" /></Icon></SquareButton>
          </div>
          <div className="flex h-6 items-center pl-px"><CheckBox id="assoc" label="关联" /></div>
        </div>
      </Panel>
      <Panel className="h-[72px]">
        <Heading title="截面线段" />
        <div className="flex items-center gap-[2px] pt-[7px]">
          <div className="mr-[2px] flex h-8 flex-1 items-center gap-1 bg-[#ffe178] pl-px"><Star />指定位置 (0)</div>
          <SquareButton label="点构造器"><Icon w={20}><circle cx="7" cy="6" r="2" fill={OR} stroke="none" /><path d="M4 16h2M10 16h2M16 16h2" stroke="#202020" strokeWidth="2" /></Icon></SquareButton>
          <button aria-label="指定点" className="flex h-8 w-8 items-center justify-center border border-[#ffc83c] bg-[#ffe178] text-[#404040]">
            <Icon w={22}><circle cx="11" cy="11" r="6.500" strokeWidth="1.300" /><path d="M11 0v22M0 11h22" /></Icon>
          </button>
        </div>
      </Panel>
      <Panel><Heading title="父视图" open={false} /></Panel>
      <Panel className="pb-2">
        <Heading title="视图原点" />
        <div className="flex items-center justify-between pt-[7px] text-[#a0a0a0]">
          <span className="flex items-center gap-1 pl-px"><Star dim />指定位置</span>
          <button aria-label="指定位置" disabled className="flex h-8 w-8 items-center justify-center border border-[#c0c0c0]"><MoveIcon dim /></button>
        </div>
        <Panel className="mt-1 h-[93px]">
          <Heading title="放置" />
          <div className="pt-[6px]">
            <Drop id="place-method" label="方法" value="自动判断" disabled icon={<Icon><path d="M4 1h8v6H4zM1 10h13v6H1zM7 7v3" /><circle cx="7" cy="4" r="1" /><path d="M7 13L15 3" /></Icon>} />
          </div>
          <div className="pt-px pl-[10px]"><Heading title="跟踪" open={false} /></div>
        </Panel>
        <Panel className="mt-1 h-[72px]">
          <Heading title="移动视图" />
          <div className="flex items-center justify-between pt-[7px]">
            指定屏幕位置
            <button aria-label="指定屏幕位置" className="flex h-8 w-8 items-center justify-center border border-[#707070]"><MoveIcon /></button>
          </div>
        </Panel>
      </Panel>
      <Panel><Heading title="设置" open={false} /></Panel>
      <Panel><Heading title="预览" open={false} /></Panel>
      <button aria-label="收起" className="flex h-[13px] items-center justify-center border-b border-[#d0d0d0]">
        <Icon w={9} h={5}><path d="M0 5h9L4.500 0z" fill="#202020" stroke="none" /></Icon>
      </button>
    </div>
    <div className="flex justify-end pt-2 pr-[15px] pb-[10px]">
      <button className="h-[25px] w-[54px] border border-[#005f87] bg-white text-[#005f87]">关闭</button>
    </div>
  </div>
);

/* ---------- drawing sheet ---------- */

const Drawing = () => (
  <svg viewBox="416 178 1504 832" preserveAspectRatio="xMinYMin" fill="none" className="absolute inset-0 h-full w-full">
    <defs>
      <pattern id="hatch" width="29" height="29" patternUnits="userSpaceOnUse" patternTransform="rotate(43)">
        <rect width="29" height="29" fill="#8db528" />
        <path d="M14 0v29" stroke="#3a669c" strokeWidth="3" />
      </pattern>
      <linearGradient id="bore">
        <stop offset="0" stopColor="#d98200" />
        <stop offset="0.3" stopColor="#c87200" />
        <stop offset="0.5" stopColor="#b06400" />
        <stop offset="0.7" stopColor="#b86a00" />
        <stop offset="1" stopColor="#a86000" />
      </linearGradient>
    </defs>

    <g stroke="#909090">
      <path d="M1912.500 206v792" strokeDasharray="8 6" />
      <path d="M525.500 878v120M525 998.500h1387" strokeDasharray="8 8" />
    </g>

    {/* front and side views */}
    <g stroke="#2f5c94" strokeWidth="1.600">
      <path d="M994.500 353V250.500h179v148H822v-45h244M839.500 353v-19.500H902V353" />
      <path d="M1330.500 250.500H1509v148h-178.500zM1332 353.500h176M1388.500 353v-19.500h62.500V353" />
    </g>
    <g stroke="#8c8cff">
      <path d="M1084.500 222v91M1084.500 318v13M1084.500 336v90M871.500 305v26M871.500 336v14M871.500 355v27M1420.500 222v204" />
    </g>

    {/* top view */}
    <g stroke="#2f5c94" strokeWidth="1.600">
      <circle cx="1084" cy="623.500" r="89.500" />
      <circle cx="1084" cy="623.500" r="65" />
      <path d="M1131 609.500a49.500 49.500 0 1 0 0 27.500h9v-27.500z" />
      <circle cx="871" cy="623.500" r="31" />
      <circle cx="871" cy="623.500" r="18" />
      <path d="M1067 535.500L861.500 575.500a49 49 0 0 0 0 96L1067 711.500" />
    </g>
    <g stroke="#8c8cff">
      <path d="M1084.500 520v34M1084.500 560v53M1084.500 617v13M1084.500 635v53M1084.500 693v35" />
      <path d="M981 623.500h52M1038 623.500h35M1079 623.500h12M1096 623.500h52M1154 623.500h34" />
      <path d="M871.500 578v34M871.500 617v13M871.500 636v33M826 623.500h33M865 623.500h12M882 623.500h34" />
    </g>

    {/* section arrows */}
    <g stroke="#8a4a00">
      <path d="M775 623.500h47M1173 623.500h48" strokeWidth="2" />
      <path d="M775.500 577v47M1220.500 577v47M812.500 935v45M1257.500 935v45" />
      <path d="M775.500 579l-2 16h4zM1220.500 579l-2 16h4zM812.500 937l-2 15h4zM1257.500 937l-2 15h4z" fill="#8a4a00" />
    </g>
    <path d="M812 980h48M1211 980h47" stroke="#ff963c" strokeWidth="3" />

    <g fill="#2020ff" className="font-light [font-family:Lato,sans-serif]">
      <text x="1359 1384 1400 1414" y="449" fontSize="21">VIEW</text>
      <text x="1460" y="450" fontSize="28">C</text>
      <text x="768" y="681" fontSize="22">C</text>
      <text x="1213" y="681" fontSize="22">C</text>
    </g>
    <text x="426" y="1002" fontSize="12" fill="#ff9c46">"SHT1"</text>

    {/* trimetric section */}
    <g transform="translate(1220 490) scale(.33333)" stroke="#34609a" strokeWidth="4" strokeLinejoin="round">
      <path d="M78 515l4 25-8 108-6-28z" fill="#a86000" />
      <path d="M82 541C70 500 95 465 148 448L245 423l335-77-4 90 4 58-260 25-188 18z" fill="#ffac00" />
      <path d="M600 200l8 48-28 245-7-58z" fill="#c06a00" />
      <path d="M178 487C175 465 195 449 222 448c28 0 48 8 58 28l-12 152c-15-20-35-26-58-26-20 0-35 6-45 16z" fill="url(#bore)" />
      <path d="M140 488c-5-40 25-65 75-65 45 0 85 15 105 49l-40 4c-10-20-30-28-58-28-27 1-47 17-44 38z" fill="#ffac00" />
      <path d="M82 542l51-4 5-50 40-2-14 154-90 8z" fill="url(#hatch)" />
      <path d="M608 248C592 190 610 150 650 120 700 75 760 60 835 59c105 1 235 50 290 144l-71 4c-34-67-124-102-194-102-80 0-180 35-185 95l3 45z" fill="#ffac00" />
      <path d="M678 245l-3-45c5-60 105-95 185-95s160 35 194 102l-10 108c-24-65-124-103-214-103-60 0-120 23-150 58z" fill="url(#bore)" />
      <path d="M680 270c30-35 90-58 150-58 90 0 190 38 214 103h-28l-11-23h-25c-40-37-90-52-150-52-70 0-130 35-118 105l-42 3z" fill="#ffac00" />
      <path d="M712 345c-12-70 48-105 118-105 60 0 110 15 150 52l-25 246c-35-38-95-55-140-54-55 1-95 16-122 41z" fill="url(#bore)" />
      <path d="M980 292h25l11 23-26 243-10-23-25 3z" fill="#b86a00" />
      <path d="M1005 292l-25 243" />
      <path d="M280 477l40-3-2 46 262-26 28-246 70-3-8 103 43-3-26 244-422 41z" fill="url(#hatch)" />
      <path d="M1054 207l71-4-37 347-98 8 26-243h28z" fill="url(#hatch)" />
    </g>
  </svg>
);

const SheetArea = () => (
  <main className="relative flex min-w-0 flex-1 bg-white pt-[25px]">
    <div className="flex-1 border-t-2 border-r-2 border-b-2 border-l border-t-[#005f87] border-r-[#808080] border-b-[#808080] border-l-[#707070]" />
    <Drawing />
    <div className="absolute top-[27px] left-[715px] flex h-[39px] w-[74px] items-center border-b border-[#d0d0d0] bg-white pt-1 pl-[14px]">
      <button aria-label="捕捉点" className="flex items-center gap-[6px]">
        <Icon w={22}><circle cx="11" cy="11" r="8.500" stroke={DK} strokeWidth="1.300" /><path d="M11 0v7M11 15v7M0 11h7M15 11h7M9 5l2 2 2-2M9 17l2-2 2 2M5 9l2 2-2 2M17 9l-2 2 2 2" stroke={DK} /><path d="M11 7.500l3 3.500-3 3.500L8 11z" fill={OR} stroke="none" /></Icon>
        <Caret className="w-[5px]" />
      </button>
      <span className="ml-[11px] h-[26px] w-px bg-[#d0d0d0]" />
      <Caret className="mt-4 ml-1 w-[5px]" />
    </div>
    <SectionDialog />
  </main>
);

/* ---------- input method bar ---------- */

const ImeBar = () => (
  <div className="absolute right-[314px] bottom-[3px] flex h-[26px] w-[200px] items-center border border-[#a8c8e8] bg-white text-[#0070d8]">
    <Icon w={32} className="relative -top-px">
      <rect x="2" y="3" width="27" height="27" rx="4" transform="rotate(-9 16 16)" fill="#f4511e" stroke="none" />
      <path d="M24 9c-8-3-15-2-15 2 0 6 15 3 15 8 0 5-9 5-16 3" stroke="#fff" strokeWidth="4" />
    </Icon>
    <div className="flex flex-1 items-center justify-between pl-1">
      <button className="text-[15px] leading-5 font-bold">中</button>
      <Icon><circle cx="4" cy="5" r="2" strokeWidth="1.500" /><path d="M11 8h4c0 4-1 6-4 7l1-3h-1z" fill="currentColor" stroke="none" /></Icon>
      <Icon><rect x="5" y="0" width="6" height="10" rx="3" fill="currentColor" stroke="none" /><path d="M2 7c0 7 12 7 12 0M8 12v4" strokeWidth="2" /></Icon>
      <Icon><rect x="1" y="2" width="14" height="12" rx="1" strokeWidth="1.500" /><path d="M3 5h10M3 8h10M5 11h6" strokeDasharray="2 1" strokeWidth="1.500" /></Icon>
      <Icon><path d="M0 5l4-3c2 2 6 2 8 0l4 3-2 4-2-1v7H4V8L2 9z" fill="#9a6cf0" stroke="none" /><path d="M0 5l4-3 2 1-2 5-2 1zM10 3l6-2v4l-3 2z" fill="#f0503c" stroke="none" /></Icon>
      <Icon><path d="M1 2h6v5H1zM1 9h6v5H1zM9 9h6v5H9zM9 2h6v5H9z" fill="currentColor" stroke="none" /></Icon>
      <Icon w={20}><circle cx="10" cy="10" r="9.500" fill="#fff4f0" stroke="#f8dcd4" /><path d="M2 7l13-2v5L3 11z" fill="#f07814" stroke="none" /><path d="M4 9c2 2 4 1 4-1M10 8c1 2 4 1 4-1M6 13l3 3 3-3" stroke="#402010" strokeWidth="1.500" /><path d="M17 5l1 2 2 1-2 1-1 2-1-2-2-1 2-1z" fill="#ffd23c" stroke="none" /></Icon>
    </div>
  </div>
);

const App: React.FC = () => (
  <div className="relative flex h-screen flex-col overflow-hidden bg-white text-black [font-family:'Noto_Sans','Noto_Sans_CJK_SC',sans-serif]">
    <header className="shrink-0">
      <div className="bg-linear-to-r from-[#006489] to-[#057ba6]">
        <TitleBar />
        <TabBar />
      </div>
      <Ribbon />
      <SelectionBar />
    </header>
    <div className="flex min-h-0 flex-1">
      <ResourceBar />
      <PartNavigator />
      <SheetArea />
    </div>
    <footer className="flex h-6 shrink-0 items-center border-t border-b-2 border-t-[#a0a0a0] border-b-[#b4d4d4] pl-[3px] text-[12px] leading-4 font-bold">
      指定点作为截面线段位置
    </footer>
    <ImeBar />
    <span className="pointer-events-none absolute right-1 bottom-3 text-[38px] leading-[48px] whitespace-nowrap text-[#dcdcdc]/80 [font-family:'Noto_Sans_CJK_SC',sans-serif] [font-weight:350] [text-shadow:1px_1px_1px_#909090]">
      CSDN @清音菩提一寻寻
    </span>
  </div>
);

export default App;
